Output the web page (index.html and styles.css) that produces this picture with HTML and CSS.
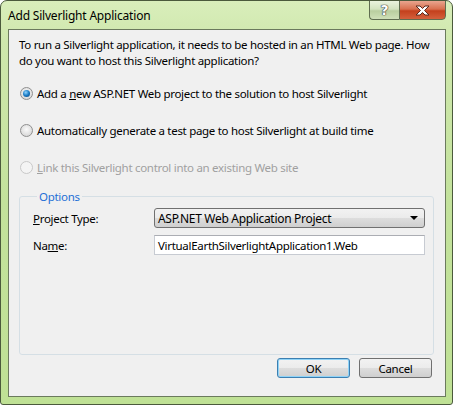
FILE: index.html
```html
<!DOCTYPE html>
<html>
<head>
<meta charset="utf-8">
<link rel="stylesheet" href="styles.css">
</head>
<body>
<div class="window">
  <div class="titlebar">
    <div class="title">Add Silverlight Application</div>
    <div class="caption-buttons">
      <div class="cbtn help">?</div>
      <div class="cbtn close"><svg width="17" height="11" viewBox="0 0 17 11"><path d="M2 1 L6 1 L8.5 3.5 L11 1 L15 1 L10.5 5.5 L15 10 L11 10 L8.5 7.5 L6 10 L2 10 L6.5 5.5 Z" fill="#fff" stroke="#5a2a1e" stroke-width="1" stroke-linejoin="round"/></svg></div>
    </div>
  </div>
  <div class="client">
    <p class="intro">To run a Silverlight application, it needs to be hosted in an HTML Web page. How<br>do you want to host this Silverlight application?</p>
    <div class="radios">
      <div class="radio-row"><span class="radio checked"></span><span>Add a <u>n</u>ew ASP.NET Web project to the solution to host Silverlight</span></div>
      <div class="radio-row"><span class="radio"></span><span>Automatically <u>g</u>enerate a test page to host Silverlight at build time</span></div>
      <div class="radio-row disabled"><span class="radio"></span><span><u>L</u>ink this Silverlight control into an existing Web site</span></div>
    </div>
    <fieldset class="group">
      <legend>Options</legend>
      <div class="field">
        <label><u>P</u>roject Type:</label>
        <div class="combo"><span>ASP.NET Web Application Project</span><span class="arrow"></span></div>
      </div>
      <div class="field">
        <label>Na<u>m</u>e:</label>
        <div class="textbox">VirtualEarthSilverlightApplication1.Web</div>
      </div>
    </fieldset>
    <div class="buttons">
      <div class="btn default">OK</div>
      <div class="btn">Cancel</div>
    </div>
  </div>
</div>
</body>
</html>
```
FILE: styles.css
```css
* { box-sizing: border-box; }
html, body { margin: 0; padding: 0; background: #fff; }
body { font-family: "Noto Sans", "Open Sans", sans-serif; font-size: 11.5px; letter-spacing: -0.3px; color: #000; }

.window {
  width: 453px;
  height: 405px;
  border: 1px solid #4b5a3c;
  border-radius: 7px 7px 3px 3px;
  background: linear-gradient(to bottom, #d9eebb 0px, #cfe8ad 40px, #c3e29c 200px, #bfe195 405px);
  display: flex;
  flex-direction: column;
  overflow: hidden;
}

.titlebar {
  height: 28px;
  display: flex;
  align-items: flex-start;
  padding-left: 7px;
}
.title {
  margin-top: 6px;
  font-size: 12px;
  letter-spacing: -0.2px;
  white-space: nowrap;
}
.caption-buttons {
  margin-left: auto;
  margin-right: 6px;
  display: flex;
  margin-top: -1px;
}
.cbtn {
  height: 20px;
  border: 1px solid #5f6d50;
  display: flex;
  align-items: center;
  justify-content: center;
  letter-spacing: 0;
}
.help {
  width: 30px;
  border-right: none;
  border-radius: 0 0 0 4px;
  background: linear-gradient(to bottom, #eaf3de 0%, #d3e3c0 45%, #b9ce9f 55%, #cfe0b8 100%);
  color: #fff;
  font-family: "DejaVu Sans", sans-serif;
  font-weight: bold;
  font-size: 14px;
  text-shadow: 0 0 1px #333, 0 0 1px #333, 0 0 1px #333;
}
.close {
  width: 47px;
  border-radius: 0 0 4px 0;
  background: linear-gradient(to bottom, #e9a58f 0%, #d8704f 45%, #c4401d 55%, #d4603c 100%);
}

.client {
  flex: 1;
  margin: 0 6px 7px 7px;
  border: 1px solid #6b7a5d;
  background: #f0f0f0;
  padding: 7px 12px 0 10px;
  display: flex;
  flex-direction: column;
}

.intro {
  margin: 0;
  line-height: 16px;
  white-space: nowrap;
}

.radios {
  margin-top: 16px;
  display: flex;
  flex-direction: column;
  gap: 20px;
  white-space: nowrap;
}
.radio-row {
  display: flex;
  align-items: center;
  gap: 4px;
  height: 17px;
}
.radio {
  width: 13px;
  height: 13px;
  border-radius: 50%;
  border: 1px solid #8f8f8f;
  background: radial-gradient(circle at 50% 40%, #fafafa 0%, #e2e2e2 55%, #cfcfcf 100%);
  margin-left: 1px;
  position: relative;
  flex: none;
}
.radio.checked::after {
  content: "";
  position: absolute;
  left: 2px;
  top: 2px;
  width: 7px;
  height: 7px;
  border-radius: 50%;
  background: radial-gradient(circle at 40% 35%, #8fd3ff 0%, #1a7bc4 50%, #0b3f78 100%);
}
.radio-row.disabled { color: #a0a0a0; }
.radio-row.disabled .radio { border-color: #c9c9c9; background: #f4f4f4; }

.group {
  margin: 13px 0 0 0;
  padding: 4px 8px 0 13px;
  border: 1px solid #d5dfe5;
  border-radius: 3px;
  height: 166px;
  width: 414px;
}
.group legend {
  padding: 0 2px;
  margin-left: 4px;
  color: #1f6fd6;
}
.field {
  display: flex;
  align-items: center;
  height: 20px;
  margin-bottom: 7px;
}
.field label {
  width: 121px;
}
.combo {
  width: 271px;
  height: 20px;
  border: 1px solid #707070;
  border-radius: 3px;
  background: linear-gradient(to bottom, #f2f2f2 0%, #ebebeb 50%, #dddddd 51%, #cfcfcf 100%);
  display: flex;
  align-items: center;
  padding-left: 3px;
  padding-right: 6px;
  font-size: 12px;
}
.combo .arrow {
  margin-left: auto;
  width: 0;
  height: 0;
  border-left: 4px solid transparent;
  border-right: 4px solid transparent;
  border-top: 4px solid #000;
}
.textbox {
  width: 271px;
  height: 20px;
  border: 1px solid #c7cbd2;
  border-top-color: #abadb3;
  background: #fff;
  display: flex;
  align-items: center;
  padding-left: 3px;
}

.buttons {
  margin-top: 3px;
  display: flex;
  justify-content: flex-end;
  gap: 9px;
  padding-right: 1px;
}
.btn {
  width: 73px;
  height: 20px;
  border: 1px solid #707070;
  border-radius: 3px;
  background: linear-gradient(to bottom, #f2f2f2 0%, #ebebeb 50%, #dddddd 51%, #cfcfcf 100%);
  display: flex;
  align-items: center;
  justify-content: center;
}
.btn.default {
  border-color: #3c7fb1;
  box-shadow: inset 0 0 0 1px #8fd3f7;
}
```
